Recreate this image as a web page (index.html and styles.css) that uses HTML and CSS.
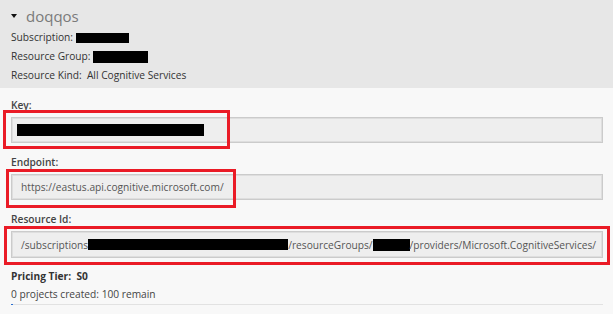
FILE: index.html
```html
<!DOCTYPE html>
<html>
<head>
<meta charset="utf-8">
<link rel="stylesheet" href="styles.css">
</head>
<body>
<div class="header">
  <div class="title"><span class="caret"></span><span class="name">doqqos</span></div>
  <div class="meta">Subscription: <span class="redact r-sub"></span></div>
  <div class="meta">Resource Group: <span class="redact r-grp"></span></div>
  <div class="meta">Resource Kind:&nbsp; All Cognitive Services</div>
</div>
<div class="content">
  <div class="field">
    <div class="label">Key:</div>
    <div class="input"><span class="redact r-key"></span></div>
    <div class="mark mark-key"></div>
  </div>
  <div class="field">
    <div class="label">Endpoint:</div>
    <div class="input">https://eastus.api.cognitive.microsoft.com/</div>
    <div class="mark mark-end"></div>
  </div>
  <div class="field field-last">
    <div class="label">Resource Id:</div>
    <div class="input input-tall">/subscriptions<span class="redact r-id1"></span>/resourceGroups/<span class="redact r-id2"></span>/providers/Microsoft.CognitiveServices/</div>
    <div class="mark mark-id"></div>
  </div>
  <div class="tier">Pricing Tier:&nbsp; S0</div>
  <div class="projects">0 projects created: 100 remain</div>
  <div class="progress"><div class="progress-fill"></div></div>
</div>
</body>
</html>
```

FILE: styles.css
```css
html, body {
  margin: 0;
  padding: 0;
}
body {
  background: #f8f8f8;
  font-family: "Open Sans", "Noto Sans", sans-serif;
  color: #333;
  width: 613px;
  height: 314px;
  overflow: hidden;
}
.header {
  background: #e7e7e7;
  padding: 4px 0 3px 11px;
  height: 81px;
}
.title {
  display: flex;
  align-items: center;
  height: 24px;
}
.caret {
  flex-shrink: 0;
  width: 0;
  height: 0;
  border-left: 3.5px solid transparent;
  border-right: 3.5px solid transparent;
  border-top: 4px solid #111;
  margin-right: 9px;
  margin-top: -1px;
}
.name {
  font-size: 15px;
  color: #7a7a7a;
  line-height: 24px;
}
.meta {
  font-size: 10.2px;
  line-height: 19px;
  height: 19px;
  color: #333;
  display: flex;
  align-items: center;
  white-space: pre;
}
.redact {
  display: inline-block;
  flex-shrink: 0;
  background: #000;
}
.r-sub { width: 53px; height: 10px; }
.r-grp { width: 55px; height: 12px; }
.content {
  padding: 9px 10px 0 11px;
}
.field {
  position: relative;
  margin-bottom: 11px;
}
.field-last {
  margin-bottom: 10px;
}
.label {
  font-size: 10.2px;
  line-height: 16px;
  font-weight: 600;
  color: #444;
  margin-bottom: 4px;
}
.input {
  height: 24px;
  box-sizing: content-box;
  border: 1px solid #cbcbcb;
  box-shadow: inset 0 0 0 1px #dedede;
  background: #eeeeee;
  font-size: 10.2px;
  color: #555;
  padding: 0 9px;
  display: flex;
  align-items: center;
  white-space: nowrap;
}
.input-tall {
  height: 25px;
}
.r-key { width: 187px; height: 12px; margin-left: -4px; }
.r-id1 { width: 200px; height: 11px; }
.r-id2 { width: 37px; height: 12px; }
.mark {
  position: absolute;
  border: 3px solid #ea1b26;
  box-sizing: border-box;
  height: 39px;
}
.mark-key { top: 13px; left: -8px; width: 227px; }
.mark-end { top: 15px; left: -5px; width: 230px; }
.mark-id { top: 15px; left: -7px; width: 606px; }
.tier {
  font-size: 10.2px;
  font-weight: 700;
  line-height: 16px;
  color: #333;
  white-space: pre;
}
.projects {
  font-size: 10.2px;
  line-height: 16px;
  margin-top: 2px;
  color: #444;
}
.progress {
  margin-top: 2px;
  height: 1px;
  background: #e2e2e2;
  width: 592px;
}
.progress-fill {
  width: 2px;
  height: 1px;
  background: #2b6fd0;
}
```
